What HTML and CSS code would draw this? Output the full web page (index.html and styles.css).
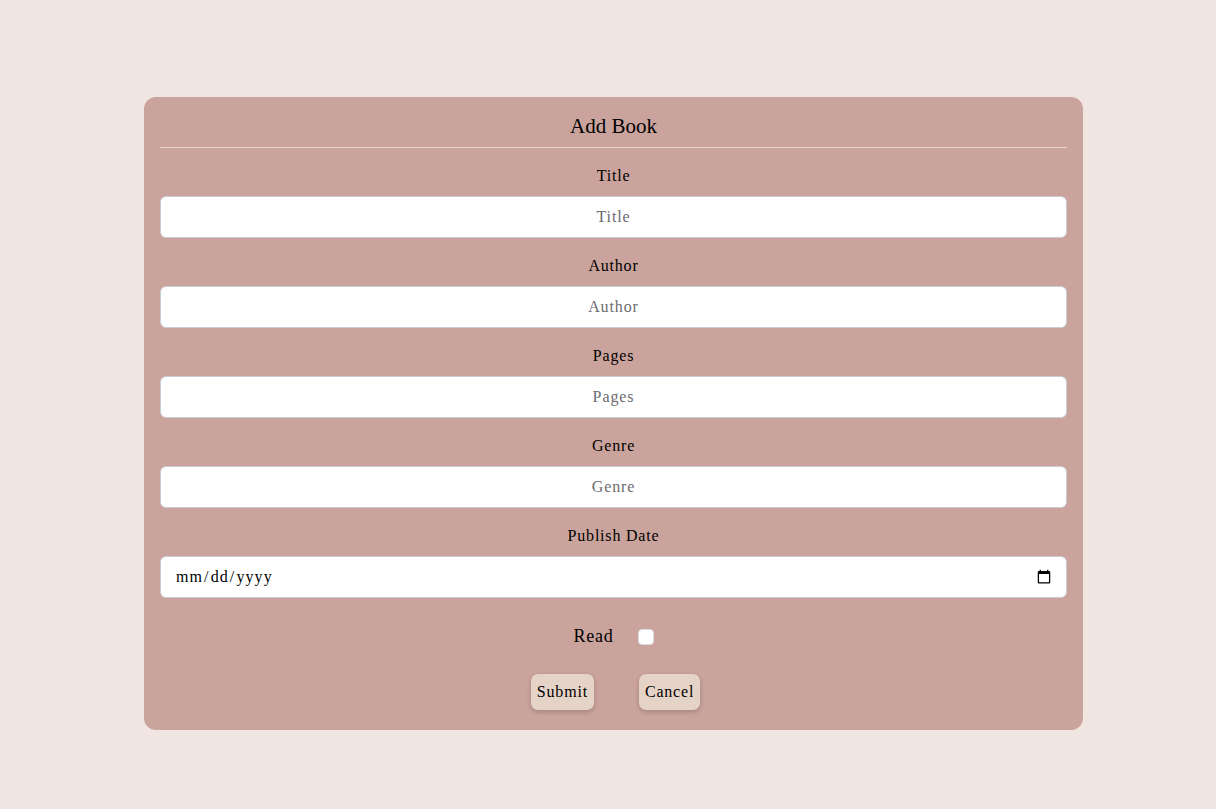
FILE: index.html
```html
<!DOCTYPE html>
<html>
<head>
<meta charset="utf-8">
<link rel="stylesheet" href="styles.css">
</head>
<body>
<div class="page">
  <form class="card">
    <h2 class="card-title">Add Book</h2>
    <div class="field">
      <label class="label">Title</label>
      <input class="input" type="text" placeholder="Title">
    </div>
    <div class="field">
      <label class="label">Author</label>
      <input class="input" type="text" placeholder="Author">
    </div>
    <div class="field">
      <label class="label">Pages</label>
      <input class="input" type="text" placeholder="Pages">
    </div>
    <div class="field">
      <label class="label">Genre</label>
      <input class="input" type="text" placeholder="Genre">
    </div>
    <div class="field">
      <label class="label">Publish Date</label>
      <input class="input date" type="date">
    </div>
    <div class="read-row">
      <label class="read-label">Read</label>
      <input class="check" type="checkbox">
    </div>
    <div class="buttons">
      <button class="btn" type="button">Submit</button>
      <button class="btn" type="button">Cancel</button>
    </div>
  </form>
</div>
</body>
</html>
```
FILE: styles.css
```css
html, body {
  margin: 0;
  padding: 0;
  background: #f0e5e0;
  font-family: "Liberation Serif", "DejaVu Serif", serif;
  color: #000;
}
.page {
  padding: 97px 0 0 144px;
  height: 712px;
}
.card {
  width: 939px;
  height: 633px;
  box-sizing: border-box;
  background: #caa39c;
  border-radius: 12px;
  padding: 0 16px;
  display: flex;
  flex-direction: column;
  letter-spacing: 0.8px;
}
.card-title {
  margin: 0;
  font-weight: normal;
  font-size: 21px;
  letter-spacing: 0;
  text-align: center;
  height: 50px;
  line-height: 58px;
  border-bottom: 1px solid #ead7ce;
}
.field {
  display: flex;
  flex-direction: column;
  align-items: stretch;
  margin-top: 16px;
}
.label {
  text-align: center;
  font-size: 16px;
  line-height: 24px;
  height: 24px;
  margin-bottom: 8px;
}
.input {
  height: 42px;
  box-sizing: border-box;
  border: 1px solid #c9ccd6;
  border-radius: 6px;
  background: #fff;
  font-family: inherit;
  font-size: 16px;
  letter-spacing: 0.9px;
  text-align: center;
  padding: 0 14px;
  outline: none;
}
.input::placeholder { color: #6b6b70; }
.date {
  text-align: left;
  letter-spacing: 1.1px;
  padding-right: 12px;
}
.read-row {
  display: flex;
  justify-content: center;
  align-items: center;
  gap: 24px;
  margin-top: 26px;
  height: 24px;
}
.read-label {
  font-size: 18px;
}
.check {
  width: 16px;
  height: 16px;
  margin: 2px 0 0 0;
  appearance: none;
  background: #fff;
  border-radius: 4px;
  border: 1px solid #dcdde3;
}
.buttons {
  display: flex;
  justify-content: center;
  gap: 45px;
  margin-top: 26px;
  padding-left: 4px;
}
.btn {
  height: 36px;
  padding: 0 6px;
  border: none;
  border-radius: 7px;
  background: #e6d3c7;
  font-family: inherit;
  font-size: 16px;
  letter-spacing: 0.8px;
  color: #000;
  box-shadow: 0 2px 5px rgba(0,0,0,0.2);
}
```
